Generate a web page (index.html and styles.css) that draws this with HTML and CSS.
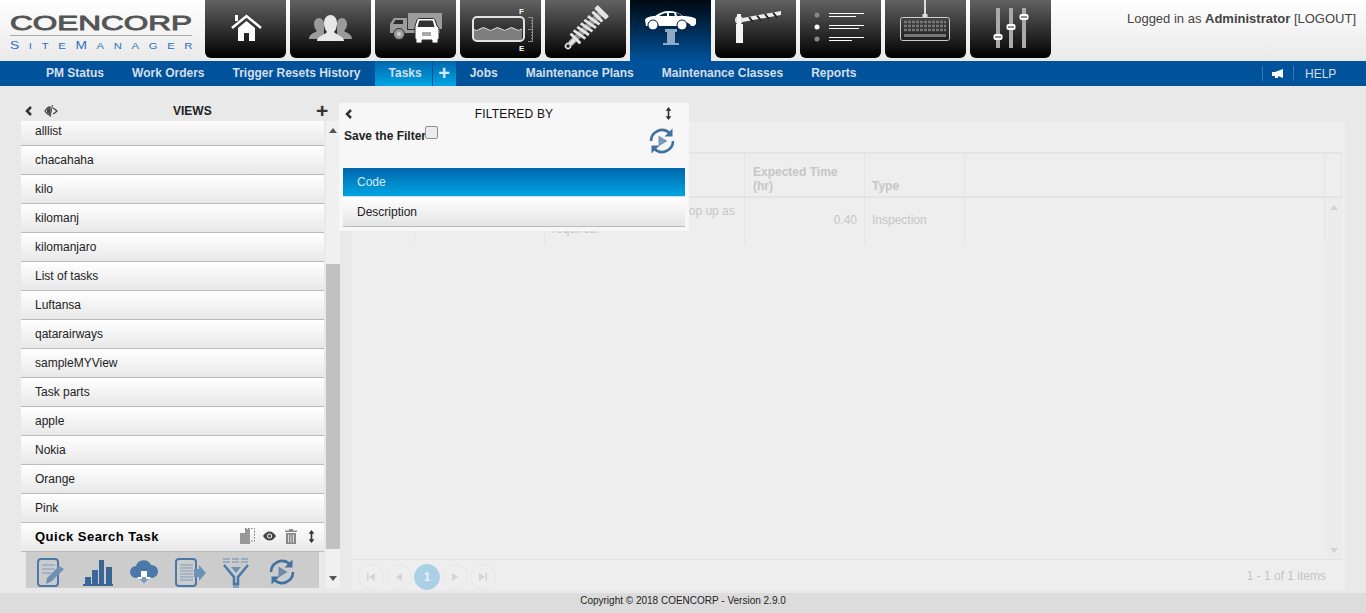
FILE: index.html
```html
<!DOCTYPE html>
<html lang="en">

<head>
    <meta charset="UTF-8" />
    <title>Coencorp SiteManager - Tasks</title>
    <link rel="stylesheet" href="styles.css">
</head>

<body>
    <svg class="defs" width="0" height="0">
        <symbol id="refresh" viewBox="0 0 28 28">
            <path d="M3 14A11 11 0 0 1 21.500 6" fill="none" stroke="currentColor" stroke-width="2.600" />
            <path d="M25 14A11 11 0 0 1 6.500 22" fill="none" stroke="currentColor" stroke-width="2.600" />
            <path d="M24.500 1.500v8h-8zM3.500 26.500v-8h8z" fill="currentColor" />
            <path d="M10.500 8.500l9 5.500-9 5.500z" fill="currentColor" opacity=".7" />
        </symbol>
        <symbol id="updown" viewBox="0 0 8 16">
            <path d="M4 0l3.500 4.500H5v7h2.500L4 16 .5 11.500H3v-7H.5z" fill="currentColor" />
        </symbol>
    </svg>

    <header class="top">
        <div class="logo">
            <svg width="186" height="46" viewBox="0 0 186 46">
                <text class="logo-main" x="0" y="22" textLength="182" lengthAdjust="spacingAndGlyphs">COENCORP</text>
                <rect x="0" y="27" width="182" height="1" fill="#aaa" />
                <g transform="scale(1.25 1)">
                    <text class="logo-sub" x="0" y="41" textLength="146" lengthAdjust="spacing">S<tspan class="logo-small">ITE</tspan>M<tspan class="logo-small">ANAGER</tspan></text>
                </g>
            </svg>
        </div>
        <nav class="tiles">
            <a class="tile">
                <svg viewBox="0 0 81 58">
                    <path d="M27 28l14.500-12L56 28" fill="none" stroke="#fff" stroke-width="2.500" />
                    <path d="M30 15h3v6h-3zM33 28l8.500-7 8.500 7v13h-6v-8h-5v8h-6z" fill="#fff" />
                </svg>
            </a>
            <a class="tile">
                <svg viewBox="0 0 81 58">
                    <path d="M19 39c0-5 5-6 8-8-2-2-3-4-3-7 0-3 2-6 5-6s5 3 5 6v15zM62 39c0-5-5-6-8-8 2-2 3-4 3-7 0-3-2-6-5-6s-5 3-5 6v15z" fill="#9a9a9a" />
                    <path d="M27 41c0-5 8-6 10-9-2-2-3-6-3-9 0-5 3-8 6.500-8s6.500 3 6.500 8c0 3-1 7-3 9 2 3 10 4 10 9z" fill="#e8e8e8" />
                </svg>
            </a>
            <a class="tile">
                <svg viewBox="0 0 81 58">
                    <path d="M33 13h34v16H33zM15 33V24l4-6h13v15z" fill="#9c9c9c" />
                    <path d="M18 24l2.500-4H28v4z" fill="#2c2c2c" />
                    <path d="M32 30h33v3H32z" fill="#9c9c9c" />
                    <circle cx="24" cy="34" r="5.500" fill="#9c9c9c" stroke="#2c2c2c" />
                    <circle cx="24" cy="34" r="2" fill="#d0d0d0" />
                    <path d="M40 26l2-6c.5-1 1-1.500 2-1.500h14c1 0 1.500.5 2 1.500l2 6 2 2v11h-1v4h-6v-3H47v3h-6v-4h-1V28z" fill="#fff" stroke="#2c2c2c" />
                    <path d="M42.500 27l1.500-5.500c.3-.8.6-1 1.500-1h11c.9 0 1.200.2 1.500 1l1.500 5.500z" fill="#333" />
                    <path d="M47 33h9M47 35h9" stroke="#555" />
                </svg>
            </a>
            <a class="tile">
                <svg viewBox="0 0 81 58">
                    <path d="M13 29q3.500 3 7 0t7 0 7 0 7 0 7 0 7 0 7 0v9a3 3 0 0 1-3 3H16a3 3 0 0 1-3-3z" fill="#7e7e7e" />
                    <rect x="13" y="17" width="51" height="24" rx="4" fill="none" stroke="#e2e2e2" stroke-width="2" />
                    <path d="M13 29q3.500 3 7 0t7 0 7 0 7 0 7 0 7 0 7 0" fill="none" stroke="#e2e2e2" />
                    <path d="M68 17.500h5M71 20.500h2M71 23.500h2M71 26.500h2M68 29.500h5M71 32.500h2M71 35.500h2M71 38.500h2M68 41.500h5M72.500 17v25" stroke="#8a8a8a" />
                    <text class="gauge" x="59" y="14">F</text>
                    <text class="gauge" x="59" y="51">E</text>
                </svg>
            </a>
            <a class="tile">
                <svg viewBox="0 0 81 58">
                    <g transform="rotate(45 40 29)">
                        <rect x="37" y="4" width="6" height="46" fill="#8a8a8a" />
                        <rect x="32" y="3" width="16" height="5" rx="1" fill="#e4e4e4" />
                        <rect x="33" y="10" width="14" height="3" rx="1" fill="#e4e4e4" />
                        <path d="M33 18l14-2.500M33 23l14-2.500M33 28l14-2.500M33 33l14-2.500M33 38l14-2.500" stroke="#e4e4e4" stroke-width="2.800" />
                        <rect x="33" y="41" width="14" height="3" rx="1" fill="#e4e4e4" />
                        <rect x="38" y="44" width="4" height="6" fill="#e4e4e4" />
                        <circle cx="40" cy="53" r="2.500" fill="#2a2a2a" stroke="#e4e4e4" stroke-width="1.600" />
                    </g>
                </svg>
            </a>
            <a class="tile tile-on">
                <svg viewBox="0 0 81 58">
                    <path d="M35 29h12v3h-2v11h4v2H33v-2h4V32h-2z" fill="#8fa9c6" />
                    <path d="M15 20c1-3 6-4 10-4 4-3 8-5 14-5 6 0 10 2 14 5 5 0 11 1 13 3v5l-2 2h-3a6 6 0 0 0-11 0H29a6 6 0 0 0-11 0h-2z" fill="#fff" />
                    <path d="M29 16c3-2 5-3 8-3v3zM39 13h5l1 3h-6zM46 13c2 0 4 1 6 3h-5z" fill="#00264a" />
                    <circle cx="23" cy="25" r="5" fill="#fff" stroke="#001f3d" />
                    <circle cx="52" cy="25" r="5" fill="#fff" stroke="#001f3d" />
                </svg>
            </a>
            <a class="tile">
                <svg viewBox="0 0 81 58">
                    <path d="M22 19L66 11v4L22 23z" fill="#eee" />
                    <path d="M34 17l4 5M42 15.500l4 5M50 14l4 5M58 12.500l4 5" stroke="#222" stroke-width="2" />
                    <circle cx="24" cy="20" r="4" fill="#ddd" />
                    <path d="M22 14h4v10h2v19h-7V24h1z" fill="#f4f4f4" />
                </svg>
            </a>
            <a class="tile">
                <svg viewBox="0 0 81 58">
                    <circle cx="17" cy="15" r="2.500" fill="#888" />
                    <circle cx="17" cy="27" r="2.500" fill="#fff" />
                    <circle cx="17" cy="39" r="2.500" fill="#888" />
                    <path d="M29 13.500h35M29 16.500h27M29 25.500h35M29 28.500h30M29 37.500h35M29 40.500h23" stroke="#fff" />
                </svg>
            </a>
            <a class="tile">
                <svg viewBox="0 0 81 58">
                    <path d="M40 0v15" stroke="#ddd" stroke-width="2" />
                    <rect x="37.500" y="14" width="5" height="4" fill="#ddd" />
                    <rect x="15.500" y="17.500" width="49" height="23" rx="2" fill="none" stroke="#ccc" />
                    <path d="M19 22h42M19 26h42M19 30h42" stroke="#777" stroke-width="2.500" stroke-dasharray="3 1" />
                    <path d="M19 35.500h42" stroke="#777" stroke-width="3" />
                </svg>
            </a>
            <a class="tile">
                <svg viewBox="0 0 81 58">
                    <path d="M26 8h4v40h-4zM39 8h4v40h-4zM52 8h4v40h-4z" fill="#aaa" />
                    <rect x="23.500" y="34" width="9" height="6" rx="2" fill="#fff" />
                    <rect x="36.500" y="24" width="9" height="6" rx="2" fill="#fff" />
                    <rect x="49.500" y="14" width="9" height="6" rx="2" fill="#fff" />
                    <path d="M25 37h6M38 27h6M51 17h6" stroke="#222" />
                </svg>
            </a>
        </nav>
        <div class="login">Logged in as <b>Administrator</b> [LOGOUT]</div>
    </header>

    <nav class="menu">
        <a class="menu-item">PM Status</a>
        <a class="menu-item">Work Orders</a>
        <a class="menu-item">Trigger Resets History</a>
        <a class="menu-item menu-on">Tasks</a>
        <a class="menu-plus">+</a>
        <a class="menu-item">Jobs</a>
        <a class="menu-item">Maintenance Plans</a>
        <a class="menu-item">Maintenance Classes</a>
        <a class="menu-item">Reports</a>
        <div class="menu-right">
            <span class="menu-icon">
                <svg width="12" height="10" viewBox="0 0 12 10">
                    <path d="M0 3h3l8-3v9L6 7v2H3V7H0z" fill="#fff" />
                </svg>
            </span>
            <a class="menu-help">HELP</a>
        </div>
    </nav>

    <main class="content">
        <aside class="views">
            <div class="views-head">
                <svg class="ico-back" width="8" height="10" viewBox="0 0 8 10">
                    <path d="M6 1L2 5l4 4" fill="none" stroke="#333" stroke-width="2.500" />
                </svg>
                <svg class="ico-hide" width="14" height="12" viewBox="0 0 14 12">
                    <path d="M1 6c2-3 3-4 5-4v8C4 10 3 9 1 6zM9 3c2 1 3 2 4 3-1 1-2 2-4 3" fill="none" stroke="#444" stroke-width="1.300" />
                    <path d="M8.500 0L6 12M3.500 4.500v3l2 1v-5z" stroke="#444" fill="#444" />
                </svg>
                <span class="views-title">VIEWS</span>
                <span class="views-add">+</span>
            </div>
            <div class="views-body">
                <div class="views-col">
                    <ul class="view-list">
                        <li>alllist</li>
                        <li>chacahaha</li>
                        <li>kilo</li>
                        <li>kilomanj</li>
                        <li>kilomanjaro</li>
                        <li>List of tasks</li>
                        <li>Luftansa</li>
                        <li>qatarairways</li>
                        <li>sampleMYView</li>
                        <li>Task parts</li>
                        <li>apple</li>
                        <li>Nokia</li>
                        <li>Orange</li>
                        <li>Pink</li>
                    </ul>
                    <div class="quick">
                        <span class="quick-title">Quick Search Task</span>
                        <svg width="15" height="17" viewBox="0 0 15 17">
                            <path d="M5 .5h9.500v12.500H11" fill="none" stroke="#777" stroke-dasharray="1.500 1.500" />
                            <path d="M0 5h5V1h5v15H0z" fill="#999" />
                        </svg>
                        <svg class="quick-eye" width="13" height="10" viewBox="0 0 13 10">
                            <path d="M0 5c2-3 4-4.500 6.500-4.500S11 2 13 5c-2 3-4 4.500-6.500 4.500S2 8 0 5z" fill="#444" />
                            <circle cx="6.500" cy="5" r="2.500" fill="#eee" />
                            <circle cx="6.500" cy="5" r="1.500" fill="#444" />
                        </svg>
                        <svg class="quick-bin" width="12" height="15" viewBox="0 0 12 15">
                            <path d="M4 0h4v1.500h4V3H0V1.500h4zM1 4h10v11H1z" fill="#888" />
                            <path d="M3.500 5.500v8M6 5.500v8M8.500 5.500v8" stroke="#ddd" />
                        </svg>
                        <svg class="quick-size" width="7" height="13" color="#333"><use href="#updown" /></svg>
                    </div>
                    <div class="tools">
                        <svg width="30" height="30" viewBox="0 0 30 30">
                            <rect x="1" y="1" width="20" height="27" rx="3" fill="none" stroke="#4a78a8" stroke-width="2" />
                            <path d="M5 7h13M5 11h13M5 15h9" stroke="#7d9cbd" />
                            <path d="M9 26l1-6L22 8l5 3-12 12z" fill="#6d90b5" />
                        </svg>
                        <svg width="30" height="28" viewBox="0 0 30 28">
                            <path d="M2 19h6v7H2zM9 12h6v14H9zM16 2h5v24h-5zM23 9h6v17h-6z" fill="#3a6597" />
                            <path d="M0 26h30v2H0z" fill="#3a6597" />
                        </svg>
                        <svg width="28" height="28" viewBox="0 0 28 28">
                            <path d="M6 20a6 6 0 0 1 0-12 8 8 0 0 1 15-1 6.500 6.500 0 0 1 1 13z" fill="#4a78a8" />
                            <path d="M11 13h6v6h4l-7 8-7-8h4z" fill="#fff" />
                            <path d="M12 19h4v2h3l-5 5-5-5h3z" fill="#7d9cbd" />
                        </svg>
                        <svg width="31" height="30" viewBox="0 0 31 30">
                            <rect x="1" y="1" width="20" height="27" rx="3" fill="none" stroke="#4a78a8" stroke-width="2" />
                            <path d="M5 7h13M5 10h13M5 13h13M5 16h13M5 19h13M5 22h13" stroke="#7d9cbd" />
                            <path d="M19 11h5V7l7 8-7 8v-4h-5z" fill="#6d90b5" />
                        </svg>
                        <svg width="28" height="30" viewBox="0 0 28 30">
                            <path d="M1 1h26M1 4h26" stroke="#6d90b5" stroke-dasharray="7 2" />
                            <path d="M2 7l10 12v7h4v-7L26 7" fill="none" stroke="#4a78a8" stroke-width="2.500" />
                            <path d="M9 9h10l-5 6z" fill="#6d90b5" />
                            <path d="M11 28h6M11 30h6" stroke="#4a78a8" />
                        </svg>
                        <svg class="tool-refresh" width="28" height="28"><use href="#refresh" /></svg>
                    </div>
                </div>
                <div class="scroll">
                    <span class="arrow-up"></span>
                    <span class="scroll-space"></span>
                    <span class="scroll-thumb"></span>
                    <span class="arrow-down"></span>
                </div>
            </div>
        </aside>

        <section class="filter">
            <div class="filter-head">
                <svg width="8" height="10" viewBox="0 0 8 10">
                    <path d="M6 1L2 5l4 4" fill="none" stroke="#333" stroke-width="2.500" />
                </svg>
                <span class="filter-title">FILTERED BY</span>
                <svg width="7" height="13" color="#333"><use href="#updown" /></svg>
            </div>
            <div class="filter-save">
                <label class="save-label">Save the Filter<input type="checkbox" class="save-box"></label>
                <svg class="filter-run" width="28" height="28"><use href="#refresh" /></svg>
            </div>
            <div class="filter-row filter-row-on">Code</div>
            <div class="filter-row">Description</div>
        </section>

        <section class="grid">
            <div class="grid-tool"></div>
            <div class="grid-row grid-head">
                <div></div>
                <div></div>
                <div></div>
                <div class="head-time">Expected Time (hr)</div>
                <div>Type</div>
                <div></div>
                <div></div>
            </div>
            <div class="grid-body">
                <div class="grid-row grid-data">
                    <div></div>
                    <div></div>
                    <div class="cell-top">Check the oil levels, and top up as required.</div>
                    <div class="cell-num">0.40</div>
                    <div>Inspection</div>
                    <div></div>
                </div>
                <div class="grid-scroll">
                    <span class="arrow-up"></span>
                    <span class="arrow-down"></span>
                </div>
            </div>
            <div class="pager">
                <a class="page-btn">
                    <svg width="8" height="8" viewBox="0 0 8 8"><path d="M0 0h1.500v8H0zM8 0v8L2 4z" /></svg>
                </a>
                <a class="page-btn">
                    <svg width="6" height="8" viewBox="0 0 6 8"><path d="M6 0v8L0 4z" /></svg>
                </a>
                <a class="page-btn page-on">1</a>
                <a class="page-btn">
                    <svg width="6" height="8" viewBox="0 0 6 8"><path d="M0 0v8l6-4z" /></svg>
                </a>
                <a class="page-btn">
                    <svg width="8" height="8" viewBox="0 0 8 8"><path d="M8 0H6.500v8H8zM0 0v8l6-4z" /></svg>
                </a>
                <span class="page-info">1 - 1 of 1 items</span>
            </div>
        </section>
    </main>

    <footer class="foot">Copyright © 2018 COENCORP - Version 2.9.0</footer>
</body>

</html>
```

FILE: styles.css
```css
* {
    box-sizing: border-box;
}

body {
    font-family: "Liberation Sans", Arial, sans-serif;
    font-size: 12px;
    background-color: #e9e9e9;
    margin: 0;
    height: 100vh;
    display: flex;
    flex-direction: column;
    overflow: hidden;
    color: #222;
}

.defs {
    position: absolute;
}

/* top bar */
.top {
    height: 61px;
    display: flex;
    flex-shrink: 0;
    background: linear-gradient(#fff, #e9e9e9);
}

.logo {
    width: 205px;
    padding: 8px 0 0 10px;
}

.logo-main {
    font-family: "Liberation Sans", sans-serif;
    font-size: 21px;
    fill: #555;
    stroke: #555;
    stroke-width: .9px;
}

.logo-sub {
    font-family: "Liberation Sans", sans-serif;
    font-size: 11px;
    fill: #2a6fc4;
}

.logo-small {
    font-size: 9px;
}

.tiles {
    display: flex;
    gap: 4px;
}

.tile {
    display: block;
    width: 81px;
    height: 58px;
    background: linear-gradient(#626262, #000);
    border-radius: 0 0 6px 6px;
}

.tile svg {
    display: block;
    width: 81px;
    height: 58px;
}

.tile-on {
    height: 61px;
    background: linear-gradient(#000810, #00529b);
    border-radius: 0;
}

.gauge {
    font-family: "Liberation Sans", sans-serif;
    font-size: 8px;
    font-weight: bold;
    fill: #fff;
}

.login {
    margin-left: auto;
    padding: 11px 10px 0 0;
    font-size: 13px;
    color: #444;
}

/* blue menu */
.menu {
    height: 25px;
    flex-shrink: 0;
    display: flex;
    align-items: stretch;
    padding-left: 32px;
    background-color: #00529b;
    color: #d5dfea;
    font-weight: bold;
}

.menu-item {
    padding: 0 14px;
    line-height: 24px;
}

.menu-on {
    padding-right: 10px;
    background: linear-gradient(#0066ad, #00a5e2);
}

.menu-plus {
    width: 23px;
    margin-left: 1px;
    background: linear-gradient(#0066ad, #00a5e2);
    font-size: 20px;
    line-height: 24px;
    text-align: center;
    color: #d5e5f2;
}

.menu-right {
    margin-left: auto;
    display: flex;
    align-items: center;
    font-weight: normal;
}

.menu-icon {
    display: flex;
    align-items: center;
    justify-content: center;
    width: 32px;
    height: 15px;
    border-left: 1px solid #3d77ac;
    border-right: 1px solid #3d77ac;
}

.menu-help {
    width: 72px;
    padding-left: 11px;
    line-height: 24px;
}

/* page body */
.content {
    flex: 1;
    min-height: 0;
    display: flex;
    padding-left: 21px;
    position: relative;
}

.views {
    width: 319px;
    margin: 17px 0 5px;
    display: flex;
    flex-direction: column;
}

.views-head {
    height: 18px;
    display: flex;
    align-items: center;
    padding: 0 0 2px 4px;
    flex-shrink: 0;
}

.ico-hide {
    margin-left: 11px;
}

.views-title {
    width: 100px;
    margin-left: 107px;
    padding-left: 8px;
    font-weight: bold;
    color: #222;
}

.views-add {
    margin-left: 51px;
    font-size: 21px;
    font-weight: bold;
    line-height: 16px;
    color: #333;
}

.views-body {
    flex: 1;
    min-height: 0;
    display: flex;
    gap: 2px;
}

.views-col {
    width: 303px;
    display: flex;
    flex-direction: column;
}

.view-list {
    flex: 1;
    min-height: 0;
    overflow: hidden;
    list-style: none;
    margin: 0;
    padding: 0;
}

.view-list li {
    height: 29px;
    line-height: 28px;
    padding-left: 14px;
    background: linear-gradient(#fff, #e8e8e8);
    border-bottom: 1px solid #bbb;
}

.view-list li:first-child {
    margin-top: -4px;
}

.quick {
    height: 29px;
    flex-shrink: 0;
    display: flex;
    align-items: center;
    padding: 0 9px 2px 14px;
    background: linear-gradient(#fff, #e8e8e8);
    border-bottom: 1px solid #bbb;
}

.quick-title {
    flex: 1;
    font-size: 13px;
    font-weight: bold;
    letter-spacing: .5px;
    color: #000;
}

.quick-eye {
    margin-left: 8px;
}

.quick-bin {
    margin-left: 9px;
}

.quick-size {
    margin-left: 11px;
}

.tools {
    height: 36px;
    flex-shrink: 0;
    margin: 0 5px 0 5px;
    padding: 6px 0 0 3px;
    display: grid;
    grid-template-columns: repeat(6, 46px);
    justify-items: center;
    align-items: start;
    background-color: #ccc;
    overflow: hidden;
}

.tool-refresh {
    color: #41719f;
}

.scroll {
    width: 14px;
    display: flex;
    flex-direction: column;
    align-items: center;
    background-color: #f0f0f0;
    padding: 7px 0;
}

.scroll-space {
    height: 131px;
}

.scroll-thumb {
    width: 14px;
    height: 285px;
    background-color: #c1c1c1;
}

.arrow-up {
    border: 4px solid transparent;
    border-top: 0;
    border-bottom: 5px solid #555;
}

.arrow-down {
    margin-top: auto;
    border: 4px solid transparent;
    border-bottom: 0;
    border-top: 5px solid #555;
}

/* filter popup */
.filter {
    position: absolute;
    left: 339px;
    top: 17px;
    width: 350px;
    height: 128px;
    padding: 0 4px;
    background-color: #f7f7f7;
    z-index: 2;
}

.filter-head {
    height: 21px;
    display: flex;
    align-items: center;
    justify-content: space-between;
    padding: 0 13px 0 2px;
}

.filter-title {
    margin-left: 10px;
    color: #111;
    letter-spacing: .2px;
}

.filter-save {
    height: 44px;
    display: flex;
    justify-content: space-between;
    padding-right: 9px;
}

.save-label {
    display: flex;
    align-items: flex-start;
    margin-left: 1px;
    font-weight: bold;
    color: #222;
    padding-top: 5px;
}

.save-box {
    appearance: none;
    width: 13px;
    height: 13px;
    margin: -3px 0 0 -1px;
    background-color: #ececec;
    border: 1px solid #8f8f8f;
    border-radius: 2px;
}

.filter-run {
    color: #41719f;
    margin-top: 3px;
}

.filter-row {
    height: 30px;
    line-height: 30px;
    padding-left: 14px;
    color: #222;
    background: linear-gradient(#fff, #e4e4e4);
    border-bottom: 1px solid #bbb;
}

.filter-row-on {
    height: 29px;
    line-height: 29px;
    color: #dbe8f2;
    background: linear-gradient(#0066ad, #00a5e2);
    border-bottom: 1px solid #bfe3f4;
}

/* dimmed grid */
.grid {
    width: 993px;
    margin: 36px 0 3px 12px;
    padding-right: 3px;
    display: flex;
    flex-direction: column;
    background-color: #eee;
    color: #c6c6c6;
}

.grid-tool {
    height: 32px;
    flex-shrink: 0;
    border-bottom: 2px solid #e4e4e4;
}

.grid-row {
    display: grid;
    grid-template-columns: 63px 130px 200px 120px 100px 360px 17px;
}

.grid-row > div {
    padding: 0 7px;
    border-right: 1px solid #e4e4e4;
}

.grid-head {
    height: 44px;
    flex-shrink: 0;
    border-bottom: 2px solid #e4e4e4;
    font-weight: bold;
    line-height: 14px;
}

.grid-head > div {
    display: flex;
    align-items: flex-end;
    padding-bottom: 3px;
}

.grid-head > .head-time {
    padding-left: 8px;
}

.grid-body {
    flex: 1;
    min-height: 0;
    position: relative;
}

.grid-data {
    height: 46px;
    grid-template-columns: 63px 130px 200px 120px 100px 360px;
    align-items: stretch;
    line-height: 45px;
}

.grid-data > .cell-top {
    line-height: 18px;
    padding-top: 4px;
}

.cell-num {
    text-align: right;
}

.grid-scroll {
    position: absolute;
    right: 0;
    top: 0;
    bottom: 0;
    width: 17px;
    display: flex;
    flex-direction: column;
    align-items: center;
    padding: 7px 0 6px;
    background-color: #ececec;
}

.grid-scroll .arrow-up {
    border-bottom-color: #d2d2d2;
}

.grid-scroll .arrow-down {
    border-top-color: #d2d2d2;
}

.pager {
    height: 31px;
    flex-shrink: 0;
    display: flex;
    align-items: flex-start;
    gap: 2px;
    padding: 4px 16px 0 6px;
    border-top: 1px solid #e2e2e2;
}

.page-btn {
    width: 26px;
    height: 26px;
    display: flex;
    align-items: center;
    justify-content: center;
    border: 1px solid #e6e6e6;
    border-radius: 50%;
    fill: #d4d4d4;
}

.page-on {
    background-color: #a9d0e5;
    border-color: #a9d0e5;
    color: #eef;
    font-weight: bold;
}

.page-info {
    margin: 5px 0 0 auto;
    color: #c4c4c4;
}

.foot {
    height: 20px;
    flex-shrink: 0;
    background-color: #dcdcdc;
    color: #222;
    font-size: 10px;
    line-height: 16px;
    text-align: center;
}
```
